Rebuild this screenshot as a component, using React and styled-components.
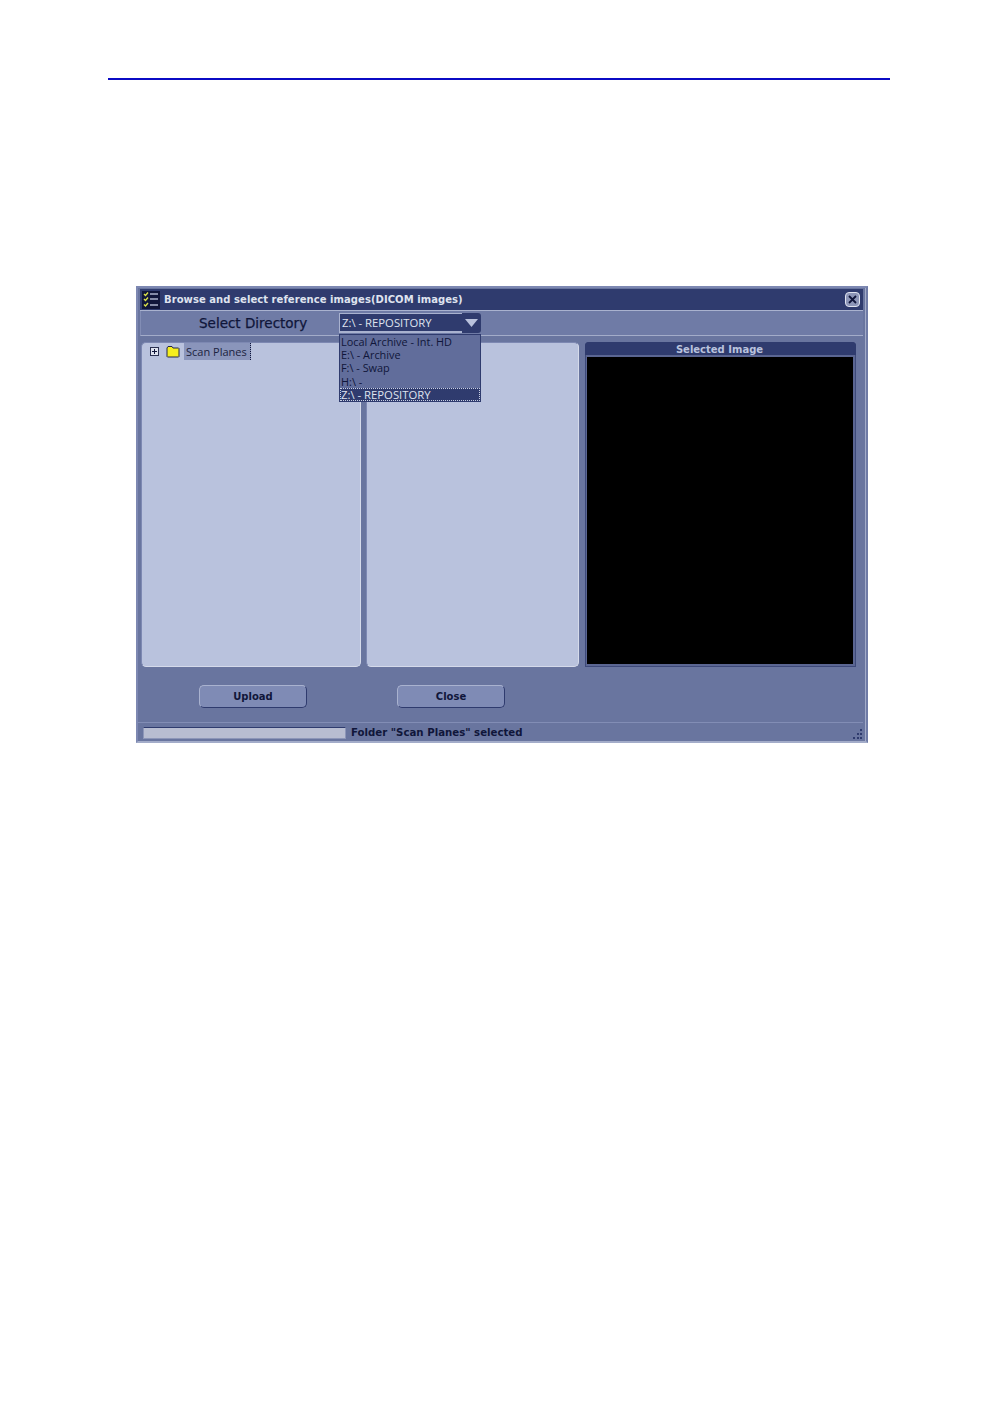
import React from "react";
import styled, { createGlobalStyle } from "styled-components";

const Global = createGlobalStyle`
  html, body { margin: 0; padding: 0; background: #fff; }
  body { font-family: "DejaVu Sans", sans-serif; }
`;

const Page = styled.div`
  width: 998px;
  height: 1416px;
  padding-top: 78px;
  box-sizing: border-box;
  background: #fff;
  overflow: hidden;
`;

const Rule = styled.div`
  height: 2px;
  width: 782px;
  margin-left: 108px;
  background: #0b0bc4;
`;

const Win = styled.div`
  width: 732px;
  height: 457px;
  margin: 206px 0 0 136px;
  box-sizing: border-box;
  background: #69759f;
  border-top: 2px solid #7d88b2;
  border-right: 2px solid #6f7ba6;
  border-bottom: 2px solid #a3acc9;
  border-left: 2px solid #7d88b2;
  box-shadow: inset -1px 0 #a3acc9;
  display: flex;
  flex-direction: column;
  padding: 1px 3px 0 2px;
`;

const TitleBar = styled.div`
  height: 22px;
  flex: none;
  background: #2f3b6e;
  border-bottom: 1px solid #a9b2cf;
  box-sizing: border-box;
  display: flex;
  align-items: center;
  padding: 0 3px 0 2px;
`;

const TitleText = styled.div`
  color: #dfe3ef;
  font: bold 10px "DejaVu Sans", sans-serif;
  letter-spacing: 0.06px;
  margin-left: 4px;
  flex: 1;
  white-space: nowrap;
`;

const CloseBox = styled.div`
  width: 15px;
  height: 15px;
  box-sizing: border-box;
  border-radius: 4px;
  background: #8d96b8;
  border: 1px solid #dfe3ef;
  display: flex;
  align-items: center;
  justify-content: center;
`;

const Toolbar = styled.div`
  height: 25px;
  flex: none;
  box-sizing: border-box;
  background: #6f7ba6;
  border-left: 1px solid #828db5;
  border-bottom: 1px solid #a3acc9;
  display: flex;
  align-items: center;
  padding-left: 58px;
`;

const ToolLabel = styled.div`
  width: 140px;
  color: #10163a;
  font: 13.5px "DejaVu Sans", sans-serif;
  -webkit-text-stroke: 0.25px #10163a;
  white-space: nowrap;
`;

const Combo = styled.div`
  position: relative;
  width: 142px;
  height: 20px;
  display: flex;
`;

const ComboValue = styled.div`
  flex: 1;
  box-sizing: border-box;
  background: #2f3b6e;
  color: #dfe3ef;
  border: 1px solid #a9b2cf;
  border-bottom-width: 2px;
  font: 11.3px "Open Sans", sans-serif;
  line-height: 17px;
  padding-left: 2px;
  white-space: nowrap;
  margin-right: -1px;
`;

const ComboArrow = styled.div`
  width: 19px;
  background: #2f3b6e;
  border-radius: 0 3px 3px 0;
  display: flex;
  align-items: center;
  justify-content: center;
`;

const Menu = styled.div`
  position: absolute;
  top: 21px;
  left: 0;
  width: 142px;
  height: 68px;
  box-sizing: border-box;
  background: #616d9b;
  border: 1px solid #2f3b6e;
  z-index: 2;
`;

const MenuItem = styled.div`
  height: 13.2px;
  box-sizing: border-box;
  padding-left: 1px;
  font: ${(p) => (p.$active ? "11.3px" : "10.9px")}/13px "Open Sans", sans-serif;
  color: ${(p) => (p.$active ? "#dfe3ef" : "#10163a")};
  background: ${(p) => (p.$active ? "#2f3b6e" : "transparent")};
  outline: ${(p) => (p.$active ? "1px dotted #c8cfe2" : "none")};
  outline-offset: -1px;
  white-space: nowrap;
`;

const Panels = styled.div`
  display: flex;
  height: 325px;
  margin: 6px 0 0 1px;
  flex: none;
`;

const Pane = styled.div`
  box-sizing: border-box;
  width: ${(p) => p.$w}px;
  margin-right: ${(p) => p.$gap}px;
  background: #b9c2dd;
  border-radius: 5px;
  border-right: 1px solid #d5daea;
  border-bottom: 1px solid #d5daea;
  border-left: 1px solid #7d88b2;
  border-top: 1px solid #7d88b2;
`;

const TreeRow = styled.div`
  display: flex;
  align-items: center;
  height: 17px;
  padding-left: 8px;
`;

const Expander = styled.div`
  width: 9px;
  height: 9px;
  box-sizing: border-box;
  border: 1px solid #2a3050;
  background: #dfe3ef;
  position: relative;
  margin-right: 7px;
  &::before { content: ""; position: absolute; left: 1px; right: 1px; top: 3px; height: 1px; background: #10163a; }
  &::after { content: ""; position: absolute; top: 1px; bottom: 1px; left: 3px; width: 1px; background: #10163a; }
`;

const TreeLabel = styled.div`
  margin-left: 4px;
  background: #8a95bb;
  color: #1b2340;
  font: 11px "Open Sans", sans-serif;
  height: 17px;
  line-height: 17px;
  padding: 0 3px 0 2px;
  border-right: 1px dotted #10163a;
  white-space: nowrap;
`;

const ImagePane = styled.div`
  width: 271px;
  display: flex;
  flex-direction: column;
  box-sizing: border-box;
  background: #5b6692;
  border-radius: 4px 4px 0 0;
  box-shadow: inset 0 0 0 1px #3d4979;
`;

const ImageTitle = styled.div`
  height: 13px;
  flex: none;
  background: #2f3b6e;
  border-radius: 4px 4px 0 0;
  padding-right: 2px;
  text-align: center;
  color: #b9c2dd;
  font: bold 10px/15px "DejaVu Sans", sans-serif;
`;

const ImageFrame = styled.div`
  flex: 1;
  background: #000;
  margin: 2px 3px 3px 2px;
`;

const Buttons = styled.div`
  display: flex;
  height: 24px;
  margin: 18px 0 0 59px;
  gap: 90px;
  flex: none;
`;

const Btn = styled.div`
  width: 108px;
  height: 23px;
  box-sizing: border-box;
  background: #7f8bb5;
  border: 1px solid #2f3b6e;
  border-top-color: #a9b2cf;
  border-left-color: #a9b2cf;
  border-radius: 5px;
  text-align: center;
  color: #10163a;
  font: bold 10px/21px "DejaVu Sans", sans-serif;
`;

const Divider = styled.div`
  height: 1px;
  margin: 13px 0 0 -2px;
  background: #828db5;
  flex: none;
`;

const StatusBar = styled.div`
  height: 13px;
  margin-top: 3px;
  display: flex;
  align-items: center;
  position: relative;
`;

const Progress = styled.div`
  width: 203px;
  height: 12px;
  margin-left: 3px;
  box-sizing: border-box;
  background: #b8bdd1;
  border: 1px solid #8d96b8;
  border-top: 1px solid #2f3b6e;
`;

const StatusText = styled.div`
  margin-left: 5px;
  color: #10163a;
  font: bold 10.2px "DejaVu Sans", sans-serif;
  white-space: nowrap;
`;

const Grip = styled.svg`
  position: absolute;
  right: 0;
  bottom: -1px;
`;

const ListIcon = () => (
  <svg width="18" height="18" viewBox="0 0 18 18" style={{ background: "#10163a" }}>
    <path d="M2 3l1.5 1.5L6 1.5M2 8l1.5 1.5L6 6.5M2 13.5L3.5 15 6 12" fill="none" stroke="#d9e04a" strokeWidth="1.4" />
    <path d="M8 3h8M8 8h8M8 14h8" stroke="#aab2cc" strokeWidth="1.6" />
  </svg>
);

const FolderIcon = () => (
  <svg width="14" height="13" viewBox="0 0 14 13">
    <path d="M1 11.5V3l1-1.5h4l1 1.5h5.5l.5.5v8l-.5.5H1.5z" fill="#f5ee1e" stroke="#23264a" strokeWidth="1" />
  </svg>
);

export default function App() {
  return (
    <Page>
      <Global />
      <Rule />
      <Win>
        <TitleBar>
          <ListIcon />
          <TitleText>Browse and select reference images(DICOM images)</TitleText>
          <CloseBox>
            <svg width="9" height="9" viewBox="0 0 9 9">
              <path d="M1 1l7 7M8 1L1 8" stroke="#10163a" strokeWidth="1.8" />
            </svg>
          </CloseBox>
        </TitleBar>
        <Toolbar>
          <ToolLabel>Select Directory</ToolLabel>
          <Combo>
            <ComboValue>Z:\ - REPOSITORY</ComboValue>
            <ComboArrow>
              <svg width="13" height="8" viewBox="0 0 13 8">
                <path d="M0 0h13L6.5 8z" fill="#b9c2dd" />
              </svg>
            </ComboArrow>
            <Menu>
              <MenuItem>Local Archive - Int. HD</MenuItem>
              <MenuItem>E:\ - Archive</MenuItem>
              <MenuItem>F:\ - Swap</MenuItem>
              <MenuItem>H:\ -</MenuItem>
              <MenuItem $active>Z:\ - REPOSITORY</MenuItem>
            </Menu>
          </Combo>
        </Toolbar>
        <Panels>
          <Pane $w={220} $gap={5}>
            <TreeRow>
              <Expander />
              <FolderIcon />
              <TreeLabel>Scan Planes</TreeLabel>
            </TreeRow>
          </Pane>
          <Pane $w={213} $gap={6} />
          <ImagePane>
            <ImageTitle>Selected Image</ImageTitle>
            <ImageFrame />
          </ImagePane>
        </Panels>
        <Buttons>
          <Btn>Upload</Btn>
          <Btn>Close</Btn>
        </Buttons>
        <Divider />
        <StatusBar>
          <Progress />
          <StatusText>Folder "Scan Planes" selected</StatusText>
          <Grip width="12" height="12" viewBox="0 0 12 12">
            <path d="M9 1h2v2H9zM6 5h2v2H6zM9 5h2v2H9zM2 9h2v2H2zM6 9h2v2H6zM9 9h2v2H9z" fill="#2f3b6e" />
          </Grip>
        </StatusBar>
      </Win>
    </Page>
  );
}
